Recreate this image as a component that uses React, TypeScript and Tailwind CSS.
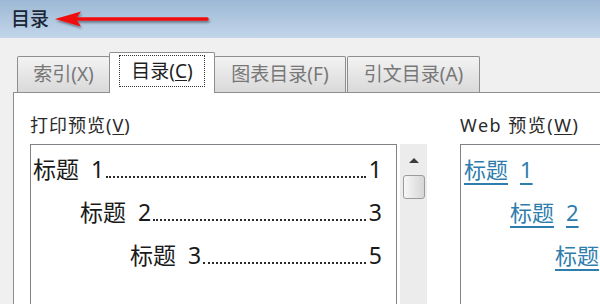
import React from 'react';

const FONT = '"Noto Sans", "Noto Sans CJK SC", sans-serif';

const printRows = [
  { indent: 'pl-[2px]', n: '1', page: '1' },
  { indent: 'pl-[49px]', n: '2', page: '3' },
  { indent: 'pl-[99px]', n: '3', page: '5' },
];

const webRows = [
  { indent: 'pl-[3px]', n: '1' },
  { indent: 'pl-[49px]', n: '2' },
  { indent: 'pl-[94px]', n: '3' },
];

function Arrow() {
  return (
    <svg width="162" height="24" viewBox="0 0 162 24" className="ml-[4px] mt-[1px]">
      <defs>
        <filter id="sh" x="-10%" y="-50%" width="120%" height="200%">
          <feDropShadow dx="1" dy="2" stdDeviation="1.2" floodColor="#30343a" floodOpacity="0.55" />
        </filter>
      </defs>
      <g filter="url(#sh)">
        <line x1="22" y1="11" x2="154" y2="11" stroke="#f01010" strokeWidth="3.5" strokeLinecap="round" />
        <path d="M2 11 L28 3.5 L23 11 L28 18.5 Z" fill="#f01010" />
      </g>
    </svg>
  );
}

function Tab({ label, w, selected }: { label: React.ReactNode; w: string; selected?: boolean }) {
  if (selected) {
    return (
      <div
        className={`${w} h-[41px] -mb-[1px] -mx-[1px] relative z-10 bg-white border border-b-0 border-[#8d8e90] rounded-t-[2px] flex items-start justify-center pt-[2px]`}
      >
        <div className="w-[86px] h-[32px] border border-dotted border-[#333] flex items-center justify-center text-[19px] text-[#1e1e1e]">
          {label}
        </div>
      </div>
    );
  }
  return (
    <div
      className={`${w} h-[36px] border border-b-0 border-[#8d8e90] rounded-t-[2px] bg-gradient-to-b from-[#f3f3f3] to-[#d9d9d9] flex items-center justify-center text-[19px] text-[#777777]`}
    >
      {label}
    </div>
  );
}

export default function App() {
  return (
    <div className="w-[600px] h-[304px] overflow-hidden bg-[#f0f0f0] flex flex-col" style={{ fontFamily: FONT }}>
      {/* title bar */}
      <div className="h-[38px] shrink-0 bg-gradient-to-b from-[#9db8d5] to-[#c3d6ea] flex items-center pl-[11px]">
        <span className="text-[19px] leading-none text-[#1b2636] font-medium">目录</span>
        <Arrow />
      </div>

      {/* tabs */}
      <div className="flex items-end pl-[17px] mt-[15px] h-[39px] shrink-0">
        <Tab w="w-[93px]" label="索引(X)" />
        <Tab
          w="w-[106px]"
          selected
          label={
            <span>
              目录(<span className="underline underline-offset-2">C</span>)
            </span>
          }
        />
        <Tab w="w-[132px]" label="图表目录(F)" />
        <div className="w-[1px]" />
        <Tab w="w-[133px]" label="引文目录(A)" />
      </div>

      {/* panel */}
      <div className="flex-1 ml-[13px] bg-white border-l border-t border-[#8d8e90] flex pt-[19px] pl-[16px]">
        <div className="flex flex-col pt-[3px]">
          <div className="h-[20px] mb-[9px] text-[18px] leading-[20px] tracking-[1px] text-[#2b2b2b] whitespace-nowrap">
            打印预览(<span className="underline underline-offset-2">V</span>)
          </div>
          <div className="flex items-start">
            <div className="w-[367px] h-[200px] border border-[#7f8287] pt-[3px] pr-[14px]">
              {printRows.map((r) => (
                <div key={r.n} className={`h-[43px] flex items-baseline ${r.indent} text-[23px] leading-[43px] text-[#1a1a1a]`}>
                  <span>标题</span>
                  <span className="ml-[12px]">{r.n}</span>
                  <span className="flex-1 h-[2px] ml-[2px] mr-[3px] border-b-2 border-dotted border-[#2a2a2a]" />
                  <span>{r.page}</span>
                </div>
              ))}
            </div>
            <div className="ml-[3px] w-[27px] h-[200px] bg-[#ececec] flex flex-col items-center pt-[14px]">
              <div className="w-0 h-0 border-l-[5px] border-r-[5px] border-b-[5px] border-l-transparent border-r-transparent border-b-[#3c3c3c]" />
              <div className="mt-[12px] w-[22px] h-[24px] rounded-[3px] border border-[#9b9b9b] bg-gradient-to-r from-[#f7f7f7] to-[#d6d6d6]" />
            </div>
          </div>
        </div>

        <div className="ml-[16px] -mt-[2px] w-[2px] bg-[#cfcfcf]" />

        <div className="ml-[17px] flex flex-col flex-1 pt-[3px]">
          <div className="h-[20px] mb-[9px] text-[18px] leading-[20px] tracking-[1.5px] text-[#2b2b2b] whitespace-nowrap">
            Web 预览(<span className="underline underline-offset-2">W</span>)
          </div>
          <div className="h-[200px] border-l border-t border-[#7f8287] pt-[3px]">
            {webRows.map((r) => (
              <div key={r.n} className={`h-[43px] flex items-center ${r.indent} text-[22px] text-[#2e7dad] whitespace-nowrap`}>
                <span className="underline underline-offset-[5px] decoration-[2px]">
                  标题<span className="ml-[12px]">{r.n}</span>
                </span>
              </div>
            ))}
          </div>
        </div>
      </div>
    </div>
  );
}
